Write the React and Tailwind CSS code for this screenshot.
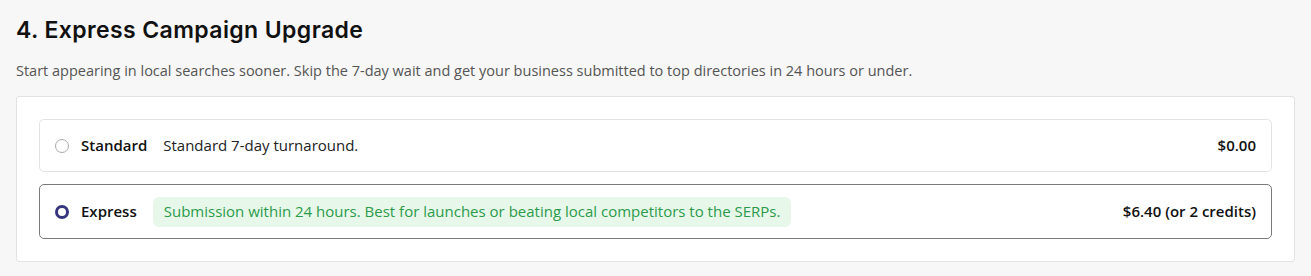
export default function App() {
  const body = { fontFamily: '"Open Sans", "Liberation Sans", sans-serif' };
  return (
    <div className="w-[1311px] h-[276px] bg-[#f7f7f7] px-4 pt-[15px]" style={body}>
      <h2
        className="text-[23px] leading-[30px] font-semibold text-[#111] tracking-[0.4px]"
        style={{ fontFamily: 'Inter, "Open Sans", sans-serif' }}
      >
        4. Express Campaign Upgrade
      </h2>
      <p className="mt-[16px] text-[14.5px] leading-[20px] text-[#555]">
        Start appearing in local searches sooner. Skip the 7-day wait and get your business submitted to top directories in 24 hours or under.
      </p>
      <div className="mt-[15px] w-[1279px] bg-white border border-[#e3e3e3] rounded-[3px] p-[22px] flex flex-col gap-[12px]">
        <label className="h-[53px] border border-[#e3e3e3] rounded-[5px] flex items-center pl-[15px] pr-[15px]">
          <span className="w-[14px] h-[14px] rounded-full border border-[#a9a9a9] bg-white shrink-0" />
          <span className="ml-[12px] text-[15px] font-semibold text-[#111]">Standard</span>
          <span className="ml-[16px] text-[15px] text-[#222]">Standard 7-day turnaround.</span>
          <span className="ml-auto text-[15px] font-semibold text-[#111]">$0.00</span>
        </label>
        <label className="h-[55px] border border-[#7a7a7a] rounded-[5px] flex items-center pl-[15px] pr-[15px]">
          <span className="w-[14px] h-[14px] rounded-full border-[3px] border-[#36357d] bg-white shrink-0" />
          <span className="ml-[12px] text-[15px] font-semibold text-[#111]">Express</span>
          <span className="ml-[16px] h-[30px] flex items-center px-[11px] rounded-[6px] bg-[#e7f8ea] text-[15px] text-[#2c9a4a]">
            Submission within 24 hours. Best for launches or beating local competitors to the SERPs.
          </span>
          <span className="ml-auto text-[15px] font-semibold text-[#111]">$6.40 (or 2 credits)</span>
        </label>
      </div>
    </div>
  );
}
